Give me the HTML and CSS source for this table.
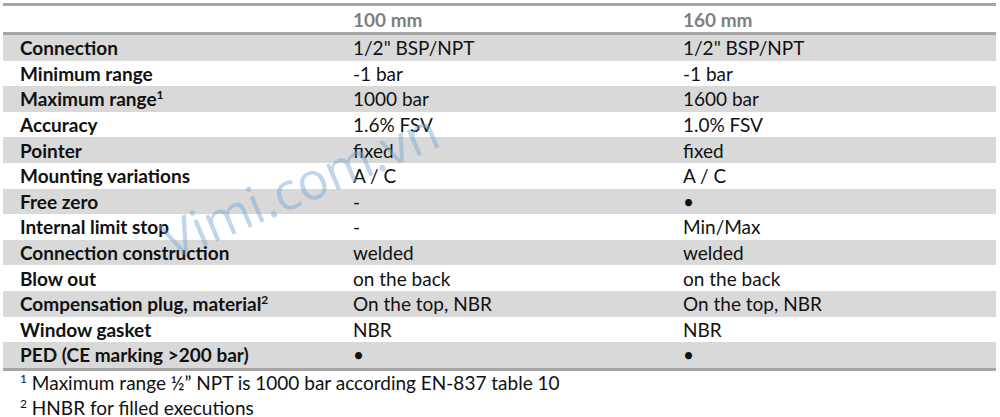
FILE: index.html
```html
<!DOCTYPE html>
<html>
<head>
<meta charset="utf-8">
<link rel="stylesheet" href="styles.css">
</head>
<body>
<div class="page">
  <table class="spec">
    <thead>
      <tr><th class="lbl"></th><th class="c2">100 mm</th><th class="c3">160 mm</th></tr>
    </thead>
    <tbody>
      <tr><td class="lbl">Connection</td><td>1/2" BSP/NPT</td><td>1/2" BSP/NPT</td></tr>
      <tr><td class="lbl">Minimum range</td><td>-1 bar</td><td>-1 bar</td></tr>
      <tr><td class="lbl">Maximum range<sup>1</sup></td><td>1000 bar</td><td>1600 bar</td></tr>
      <tr><td class="lbl">Accuracy</td><td>1.6% FSV</td><td>1.0% FSV</td></tr>
      <tr><td class="lbl">Pointer</td><td>fixed</td><td>fixed</td></tr>
      <tr><td class="lbl">Mounting variations</td><td>A / C</td><td>A / C</td></tr>
      <tr><td class="lbl">Free zero</td><td>-</td><td>•</td></tr>
      <tr><td class="lbl">Internal limit stop</td><td>-</td><td>Min/Max</td></tr>
      <tr><td class="lbl">Connection construction</td><td>welded</td><td>welded</td></tr>
      <tr><td class="lbl">Blow out</td><td>on the back</td><td>on the back</td></tr>
      <tr><td class="lbl">Compensation plug, material<sup>2</sup></td><td>On the top, NBR</td><td>On the top, NBR</td></tr>
      <tr><td class="lbl">Window gasket</td><td>NBR</td><td>NBR</td></tr>
      <tr><td class="lbl">PED (CE marking &gt;200 bar)</td><td>•</td><td>•</td></tr>
    </tbody>
  </table>
  <div class="notes">
    <p><sup>1</sup> Maximum range ½” NPT is 1000 bar according EN-837 table 10</p>
    <p><sup>2</sup> HNBR for filled executions</p>
  </div>
  <div class="watermark">Vimi.com.vn</div>
</div>
</body>
</html>
```
FILE: styles.css
```css
html, body {
  margin: 0;
  padding: 0;
  background: #ffffff;
}
body {
  font-family: "Lato", "Open Sans", sans-serif;
  color: #111111;
}
.page {
  position: relative;
  width: 1000px;
  height: 417px;
  overflow: hidden;
  padding-top: 3px;
  box-sizing: border-box;
}
.spec {
  margin: 0 4px 0 3px;
  width: 993px;
  border-collapse: collapse;
  border-top: 3px solid #a6a6a6;
  border-bottom: 3px solid #a6a6a6;
  font-size: 19px;
  table-layout: fixed;
}
.spec th, .spec td {
  padding: 0;
  text-align: left;
  height: 25.6px;
  line-height: 25px;
  white-space: nowrap;
  vertical-align: middle;
}
.spec thead th {
  height: 26px;
  color: #7f7f7f;
  font-weight: 700;
  border-bottom: 3px solid #a6a6a6;
}
.spec .lbl {
  width: 333px;
  padding-left: 17px;
  font-weight: 700;
}
.spec .c2 {
  width: 330px;
}
.spec tbody tr:nth-child(odd) {
  background: #d9d9d9;
}
.spec tbody td {
  font-weight: 400;
}
.spec tbody td.lbl {
  font-weight: 700;
}
sup {
  font-size: 12px;
  line-height: 0;
  vertical-align: 7px;
}
.notes {
  padding-left: 20px;
  font-size: 19px;
}
.notes p {
  margin: 0;
  height: 25px;
  line-height: 23px;
}
.notes sup {
  font-size: 12px;
}
.watermark {
  position: absolute;
  z-index: 2;
  left: 174px;
  top: 214px;
  white-space: nowrap;
  font-size: 52px;
  line-height: 52px;
  font-family: "Open Sans", sans-serif;
  color: rgba(120, 165, 210, 0.45);
  transform: rotate(-23deg);
  transform-origin: 0 100%;
  letter-spacing: 0;
}
```
